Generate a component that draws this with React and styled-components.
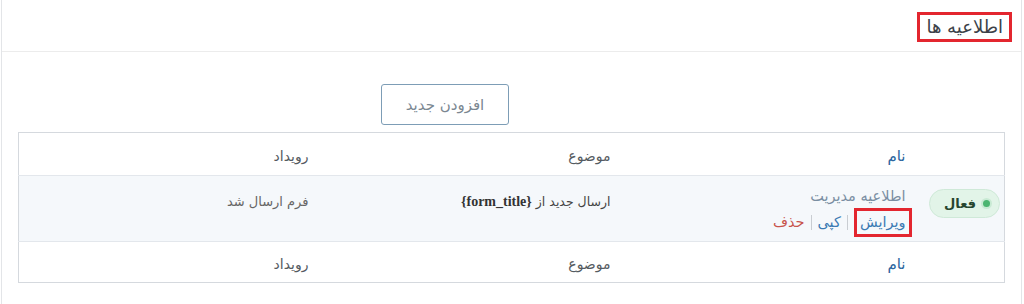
import React from 'react';
import styled, { createGlobalStyle } from 'styled-components';

const GlobalStyle = createGlobalStyle`
  body {
    margin: 0;
    background: #fff;
    font-family: "DejaVu Sans", "Noto Sans", sans-serif;
    direction: rtl;
  }
`;

const Panel = styled.div`
  margin: 0 2px 0 1px;
  height: 304px;
  box-sizing: border-box;
  border-left: 1px solid #e3e5e8;
  border-right: 1px solid #e3e5e8;
  background: #fff;
`;

const Header = styled.div`
  height: 52px;
  box-sizing: border-box;
  border-bottom: 1px solid #ececec;
  display: flex;
  align-items: flex-start;
  padding: 12px 9px 0 0;
`;

const Title = styled.h2`
  margin: 0;
  height: 30px;
  box-sizing: border-box;
  padding: 0 6px;
  border: 3px solid #e3262f;
  font-size: 18px;
  font-weight: normal;
  line-height: 23px;
  color: #3c4148;
`;

const Body = styled.div`
  padding: 32px 16px 0 17px;
`;

const Toolbar = styled.div`
  display: flex;
  padding-right: 496px;
  margin-bottom: 7px;
`;

const Button = styled.button`
  width: 128px;
  height: 41px;
  background: #fff;
  border: 1px solid #7d9db6;
  border-radius: 3px;
  font-family: inherit;
  font-size: 15px;
  color: #7b8791;
`;

const Table = styled.table`
  width: 986px;
  table-layout: fixed;
  border-collapse: collapse;
  border: 1px solid #d5d9de;
`;

const Col = styled.col`
  width: ${({ $w }) => $w}px;
`;

const Row = styled.tr`
  background: ${({ $shaded }) => ($shaded ? '#f5f8fb' : '#fff')};
  border-top: 1px solid #e3e7ec;
`;

const Th = styled.th`
  height: ${({ $tall }) => ($tall ? 43 : 41)}px;
  box-sizing: border-box;
  padding: 3px ${({ $pad }) => ($pad ?? 10)}px 0 0;
  text-align: right;
  font-weight: normal;
  font-size: ${({ $accent }) => ($accent ? 15 : 14)}px;
  color: ${({ $accent }) => ($accent ? '#2c66a0' : '#555b61')};
  vertical-align: middle;
`;

const Td = styled.td`
  height: 66px;
  box-sizing: border-box;
  padding: ${({ $top }) => $top || 10}px ${({ $pad }) => ($pad ?? 10)}px 0 0;
  vertical-align: top;
  text-align: right;
  color: #555;
`;

const Pill = styled.span`
  display: inline-flex;
  align-items: center;
  gap: 7px;
  height: 29px;
  box-sizing: border-box;
  width: 71px;
  padding: 0 9px;
  border-radius: 15px;
  background: #e2f4e8;
  border: 1px solid #cfe9d8;
  color: #26452f;
  font-weight: bold;
  font-size: 13px;
`;

const Dot = styled.span`
  width: 7px;
  height: 7px;
  border-radius: 50%;
  background: #4cb571;
  box-shadow: 0 0 0 2px #c9ead4;
`;

const Name = styled.div`
  color: #7a8ea2;
  font-size: 14.5px;
  line-height: 20px;
`;

const Actions = styled.div`
  display: flex;
  align-items: center;
  margin-top: 6px;
  font-size: 14.5px;
  line-height: 20px;
`;

const Action = styled.a`
  color: ${({ $danger }) => ($danger ? '#c8534b' : '#3b7ab3')};
  text-decoration: none;
  ${({ $boxed }) =>
    $boxed &&
    `
    border: 3px solid #e3262f;
    padding: 1px 3px 2px;
    margin: -4px -6px -5px 0;
  `}
`;

const Sep = styled.span`
  width: 1px;
  height: 15px;
  background: #c9cdd2;
  margin: 0 6px;
`;

const Code = styled.span`
  font-family: "Liberation Serif", "Times New Roman", serif;
  font-weight: bold;
  font-size: 14px;
  color: #333;
`;

const Text = styled.span`
  color: ${({ $muted }) => ($muted ? '#666' : '#444')};
  font-size: ${({ $muted }) => ($muted ? 13 : 12.5)}px;
`;

const HeadRow = ({ tall }) => (
  <>
    <Th $pad={0} $tall={tall} />
    <Th $accent $tall={tall}>نام</Th>
    <Th $tall={tall}>موضوع</Th>
    <Th $tall={tall}>رویداد</Th>
  </>
);

export default function App() {
  return (
    <>
      <GlobalStyle />
      <Panel>
        <Header>
          <Title>اطلاعیه ها</Title>
        </Header>
        <Body>
          <Toolbar>
            <Button>افزودن جدید</Button>
          </Toolbar>
          <Table>
            <colgroup>
              <Col $w={89} />
              <Col $w={295} />
              <Col $w={302} />
              <Col $w={300} />
            </colgroup>
            <thead>
              <tr>
                <HeadRow tall />
              </tr>
            </thead>
            <tbody>
              <Row $shaded>
                <Td $pad={4} $top={13}>
                  <Pill>
                    <Dot />
                    فعال
                  </Pill>
                </Td>
                <Td>
                  <Name>اطلاعیه مدیریت</Name>
                  <Actions>
                    <Action $boxed>ویرایش</Action>
                    <Sep />
                    <Action>کپی</Action>
                    <Sep />
                    <Action $danger>حذف</Action>
                  </Actions>
                </Td>
                <Td $top={15}>
                  <Text>
                    ارسال جدید از <Code>{'{form_title}'}</Code>
                  </Text>
                </Td>
                <Td $top={15}>
                  <Text $muted>فرم ارسال شد</Text>
                </Td>
              </Row>
              <Row>
                <HeadRow />
              </Row>
            </tbody>
          </Table>
        </Body>
      </Panel>
    </>
  );
}
